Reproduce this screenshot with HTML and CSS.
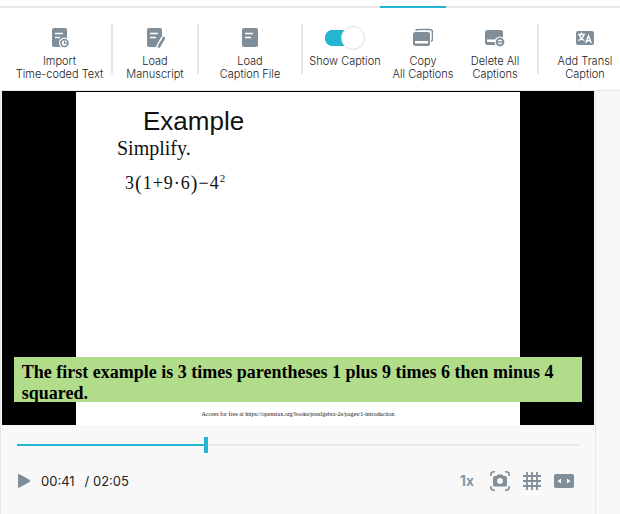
FILE: index.html
```html
<!DOCTYPE html>
<html lang="en">
<head>
<meta charset="utf-8">
<title>Caption editor</title>
<link rel="stylesheet" href="styles.css">
</head>
<body>
<div class="tabs"><span class="tab-active"></span></div>
<header class="toolbar">
  <button class="tool tool-first" type="button">
    <svg class="icon" viewBox="0 0 20 24"><rect x="2" y="2" width="15" height="19" rx="2" fill="#7f8e98"/><path d="M5 7.500h8M5 11.500h5" stroke="#fff" stroke-width="1.600"/><circle cx="14.500" cy="17" r="5.500" fill="#fff"/><circle cx="14.500" cy="17" r="3.500" fill="none" stroke="#7f8e98" stroke-width="1.700"/><path d="M14.500 14.500V17.200h2.500" fill="none" stroke="#7f8e98" stroke-width="1.300"/></svg>
    <span>Import<br>Time-coded Text</span>
  </button>
  <button class="tool tool-mid" type="button">
    <svg class="icon" viewBox="0 0 20 24"><rect x="2" y="2" width="15" height="19" rx="2" fill="#7f8e98"/><path d="M5 7.500h8M5 11.500h6" stroke="#fff" stroke-width="1.600"/><path d="M18.500 12L13 22" stroke="#fff" stroke-width="5"/><path d="M19 12L14 20.500" stroke="#7f8e98" stroke-width="2.600" stroke-linecap="round"/></svg>
    <span>Load<br>Manuscript</span>
  </button>
  <button class="tool tool-wide" type="button">
    <svg class="icon" viewBox="0 0 20 24"><rect x="2" y="2" width="16" height="19" rx="2" fill="#7f8e98"/><path d="M5 7.500h8M5 11.500h6" stroke="#fff" stroke-width="1.600"/></svg>
    <span>Load<br>Caption File</span>
  </button>
  <label class="tool tool-switch">
    <input class="switch" type="checkbox" checked>
    <span>Show Caption</span>
  </label>
  <button class="tool tool-plain" type="button">
    <svg class="icon" viewBox="0 0 20 24"><path d="M3 5q0-1.500 2-1.500h12q2.500 0 2.500 2.500v7q0 2-1.500 2" fill="none" stroke="#7f8e98" stroke-width="1.500"/><rect y="6" width="17" height="14" rx="2.500" fill="#7f8e98"/><path d="M2 15h13v2.500H2z" fill="#fff"/></svg>
    <span>Copy<br>All Captions</span>
  </button>
  <button class="tool tool-plain tool-delete" type="button">
    <svg class="icon" viewBox="0 0 20 24"><rect y="4" width="18" height="15" rx="2.500" fill="#7f8e98"/><path d="M2 13.500h10v2.500H2z" fill="#fff"/><circle cx="15" cy="16" r="5.500" fill="#fff"/><circle cx="15" cy="16" r="3.400" fill="#fff" stroke="#7f8e98" stroke-width="2"/><path d="M12.500 16h5" stroke="#7f8e98" stroke-width="1.500"/></svg>
    <span>Delete All<br>Captions</span>
  </button>
  <button class="tool tool-last" type="button">
    <svg class="icon" viewBox="0 0 20 24"><rect x="1" y="5" width="18" height="14" rx="2" fill="#7f8e98"/><path d="M3 8.500h7M6.500 6.500v2M4.500 9q1 4 5 5.500M8.700 9q-1 4-5.500 5.500" fill="none" stroke="#fff" stroke-width="1.300"/><path d="M10.700 17l2.800-7 2.800 7M11.700 14.700h3.700" fill="none" stroke="#fff" stroke-width="1.400"/></svg>
    <span>Add Transl<br>Caption</span>
  </button>
</header>
<main class="player">
  <section class="video">
    <div class="slide">
      <h1 class="slide-title">Example</h1>
      <p class="slide-text">Simplify.</p>
      <p class="formula"><span>3</span><span class="paren">(</span><span>1</span><span>+</span><span>9</span><span>·</span><span>6</span><span class="paren">)</span><span>−</span><span>4</span><sup>2</sup></p>
      <p class="credit">Access for free at https://openstax.org/books/prealgebra-2e/pages/1-introduction</p>
    </div>
    <p class="caption">The first example is 3 times parentheses 1 plus 9 times 6 then minus 4 squared.</p>
  </section>
  <section class="controls">
    <input class="seek" type="range" min="0" max="125" value="42" aria-label="Seek">
    <div class="control-row">
      <button class="control" type="button" aria-label="Play"><svg width="14" height="16" viewBox="0 0 14 16"><path d="M1 2q0-1.500 1.500-.8l10 5.500q1.500 1.300 0 2.200l-10 5.600Q1 15.300 1 13.800z" fill="#7f8e98"/></svg></button>
      <span class="time">00:41</span><span class="duration">/ 02:05</span>
      <button class="control speed" type="button">1x</button>
      <button class="control" type="button" aria-label="Snapshot"><svg width="20" height="20" viewBox="0 0 20 20"><path d="M.8 5V4q0-3.200 3.200-3.200h1M15 .8h1q3.200 0 3.200 3.200v1M.8 15v1q0 3.200 3.200 3.200h1M15 19.200h1q3.200 0 3.200-3.200v-1" fill="none" stroke="#7f8e98" stroke-width="1.600"/><path d="M6.500 5l1-1.500h5l1 1.500H15q2 0 2 2v7q0 1.500-2 1.500H5q-2 0-2-1.500V7q0-2 2-2z" fill="#7f8e98"/><circle cx="10" cy="10" r="3" fill="#f8f8f8"/></svg></button>
      <button class="control" type="button" aria-label="Grid"><svg width="18" height="18" viewBox="0 0 18 18"><path d="M4 0v18M9 0v18M14 0v18M0 4h18M0 9h18M0 14h18" stroke="#7f8e98" stroke-width="1.800"/></svg></button>
      <button class="control" type="button" aria-label="Fit width"><svg width="20" height="14" viewBox="0 0 20 14"><rect width="20" height="14" rx="2" fill="#7f8e98"/><path d="M7 4.500v5L3.500 7zM13 4.500v5L16.500 7z" fill="#f8f8f8"/></svg></button>
    </div>
  </section>
</main>
</body>
</html>
```
FILE: styles.css
```css
* {
  box-sizing: border-box;
}

body {
  margin: 0;
  min-height: 100vh;
  display: flex;
  flex-direction: column;
  overflow-x: hidden;
  background: #f8f8f8;
  color: #222;
  font-family: Inter, "Liberation Sans", sans-serif;
}

button {
  padding: 0;
  border: 0;
  background: none;
  color: inherit;
  font: inherit;
}

h1,
p {
  margin: 0;
  font-weight: normal;
}

.tabs {
  display: flex;
  padding-top: 6px;
  background: linear-gradient(#fff 6px, #e8e8e8 6px);
}

.tab-active {
  width: 66px;
  height: 2px;
  margin-left: 380px;
  background: #24b6d0;
}

.toolbar {
  display: flex;
  overflow: hidden;
  padding: 16px 0;
  background: #fff;
  border-bottom: 1px solid #e8e8e8;
  font-size: 11px;
  line-height: 13px;
  font-weight: 300;
}

.tool {
  display: flex;
  flex: none;
  flex-direction: column;
  align-items: center;
  justify-content: flex-start;
  gap: 5px;
  height: 50px;
  padding-top: 2px;
  text-align: center;
  white-space: nowrap;
}

.tool-first,
.tool-mid,
.tool-wide,
.tool-delete {
  border-right: 2px solid #e8e8e8;
}

.tool-first {
  width: 113px;
  padding-left: 8px;
}

.tool-mid {
  width: 86px;
}

.tool-wide {
  width: 104px;
}

.tool-switch {
  width: 84px;
}

.tool-plain {
  width: 72px;
}

.tool-delete {
  width: 80px;
  padding-right: 6px;
}

.tool-last {
  width: 92px;
}

.icon {
  flex: none;
  width: 20px;
  height: 24px;
}

.switch {
  appearance: none;
  display: flex;
  flex: none;
  align-items: center;
  width: 40px;
  height: 24px;
  margin: 0;
  background: linear-gradient(#24b6d0, #24b6d0) center / 24px 16px no-repeat,
    radial-gradient(circle at 8px 12px, #24b6d0 8px, transparent 8px);
}

.switch::after {
  content: "";
  width: 22px;
  height: 22px;
  margin-left: auto;
  border: 1px solid #ddd;
  border-radius: 50%;
  background: #fff;
}

.player {
  flex: 1;
  margin-right: 24px;
  border: solid #e8e8e8;
  border-width: 0 1px;
}

.video {
  position: relative;
  display: flex;
  justify-content: center;
  aspect-ratio: 592 / 334;
  margin: 0 1px;
  padding-top: 1px;
  background: #000;
}

.slide {
  display: flex;
  flex-direction: column;
  width: 75%;
  background: #fff;
  color: #111;
  font-family: "Liberation Serif", serif;
}

.slide-title {
  padding: 13px 0 0 67px;
  font: 26px/32px "Liberation Sans", sans-serif;
}

.slide-text {
  padding-left: 41px;
  font-size: 20px;
  line-height: 22px;
}

.formula {
  display: flex;
  gap: 1px;
  padding: 13px 0 0 49px;
  font-size: 18px;
  line-height: 22px;
}

.paren {
  font-size: 20px;
}

.formula sup {
  font-size: 11px;
  line-height: 12px;
}

.credit {
  margin-top: auto;
  padding-bottom: 7px;
  text-align: center;
  font-size: 6px;
  line-height: 8px;
}

.caption {
  position: absolute;
  right: 2%;
  bottom: 23px;
  left: 2%;
  padding: 5px 8px 0;
  height: 45px;
  background: #b1dc8a;
  color: #000;
  font: bold 18px/21px "Liberation Serif", serif;
}

.controls {
  padding: 12px 16px;
}

.seek {
  appearance: none;
  display: block;
  width: 100%;
  height: 16px;
  margin: 0;
  background: linear-gradient(to right, #24b6d0 34%, #e8e8e8 34%) center / 100% 2px no-repeat;
}

.seek::-webkit-slider-thumb {
  appearance: none;
  width: 4px;
  height: 16px;
  background: #24b6d0;
}

.control-row {
  display: flex;
  align-items: center;
  gap: 13px;
  height: 56px;
  padding-right: 5px;
}

.control {
  display: flex;
}

.time,
.duration {
  font-size: 13px;
  line-height: 20px;
}

.control + .time {
  margin: 0 -3px;
}

.speed {
  margin: 0 3px 0 auto;
  color: #7f8e98;
  font-size: 14px;
  font-weight: 600;
  line-height: 20px;
}
```
